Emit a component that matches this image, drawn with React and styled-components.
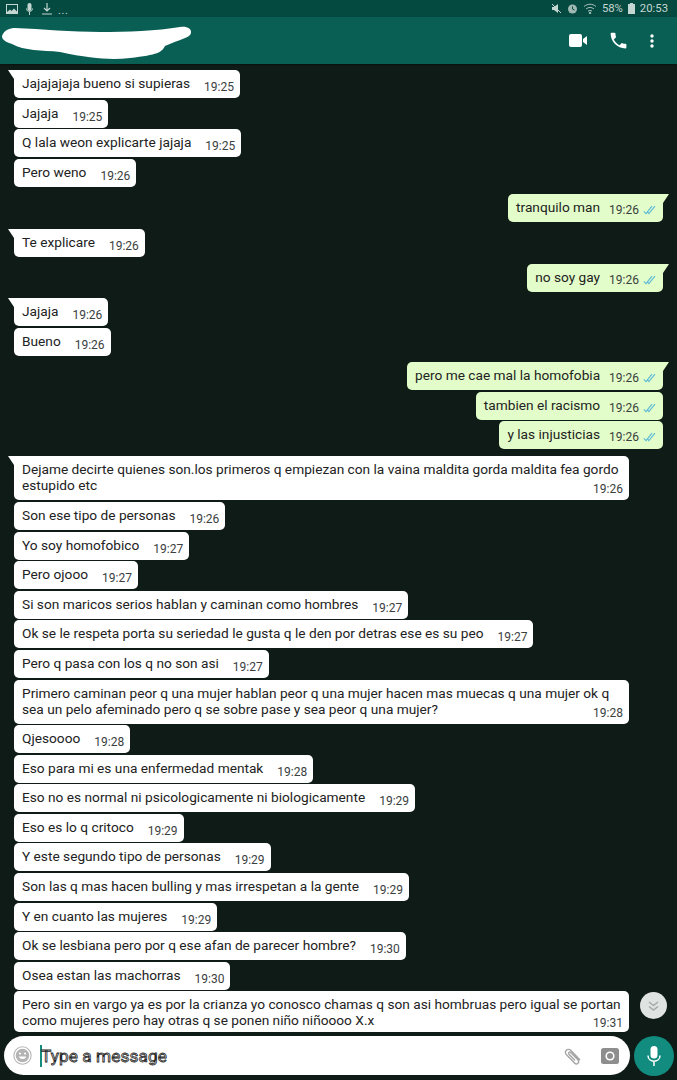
import React from "react";
import styled, { createGlobalStyle } from "styled-components";

const Global = createGlobalStyle`
  html, body { margin: 0; padding: 0; background: #0f1b16; }
  body { font-family: Roboto, "Liberation Sans", sans-serif; }
`;

const Screen = styled.div`
  width: 677px; height: 1080px; display: flex; flex-direction: column;
  background: #0f1b16; overflow: hidden; position: relative;
`;
const StatusBar = styled.div`
  height: 17px; flex: none; background: #054a40; display: flex; align-items: center;
  padding: 0 9px 0 6px; color: #c4d6d2; font-size: 11.3px;
`;
const StatusLeft = styled.div`display: flex; align-items: center; gap: 8px; flex: 1;`;
const StatusRight = styled.div`display: flex; align-items: center; gap: 5px;`;
const Dots = styled.span`font-size: 11px; letter-spacing: .6px; line-height: 1; margin-top: 3px; margin-left: -3px;`;
const Header = styled.header`
  height: 47px; flex: none; background: #0a5f54; display: flex; align-items: center;
  padding: 0 23px 0 2px; box-shadow: 0 1px 2px rgba(0,0,0,.4);
`;
const Blot = styled.svg`display: block; margin-top: 7px;`;
const HeaderIcons = styled.div`margin-left: auto; display: flex; align-items: center; gap: 21px;`;
const Chat = styled.main`
  flex: 1; min-height: 0; display: flex; flex-direction: column; padding: 6px 14px 0;
`;
const Bubble = styled.div`
  position: relative; box-sizing: border-box; flex: none;
  display: ${p => (p.$wide ? "flow-root" : "flex")};
  justify-content: flex-end;
  align-self: ${p => (p.$out ? "flex-end" : "flex-start")};
  max-width: 615px; min-height: 28px;
  margin-top: ${p => p.$gap}px;
  padding: 5px ${p => (p.$out ? 7 : 6)}px 2px 8px;
  background: ${p => (p.$out ? "#e2fdc9" : "#ffffff")};
  border-radius: ${p => (p.$tail ? (p.$out ? "5px 0 5px 5px" : "0 5px 5px 5px") : "5px")};
  color: #222;
  font-size: 13.7px; line-height: 16px;
  ${p => p.$tail ? `&::before {
    content: ""; position: absolute; top: 0; ${p.$out ? "right: -6px" : "left: -6px"};
    width: 0; height: 0; border-top: 9px solid ${p.$out ? "#e2fdc9" : "#fff"};
    ${p.$out ? "border-right: 6px solid transparent" : "border-left: 6px solid transparent"};
  }` : ""}
`;
const Body = styled.span``;
const Meta = styled.span`
  display: inline-flex; align-items: center; gap: 4px; align-self: flex-end;
  font-size: 12px; line-height: 14px; color: #3a403e;
  ${p => p.$wide
    ? `float: right; margin-top: ${p.$short ? 4 : 5}px; padding-bottom: ${p.$short ? 0 : 2}px;`
    : `margin-left: ${p.$out ? 9 : 14}px; padding-bottom: ${p.$out ? 3 : 2}px;`}
`;
const InputRow = styled.div`
  flex: none; height: 46px; display: flex; padding: 2px 3px 0 4px; box-sizing: border-box; gap: 4px;
`;
const Input = styled.div`
  flex: 1; height: 39px; background: #fff; border-radius: 20px; display: flex; align-items: center;
  padding: 0 11px 0 9px;
`;
const Caret = styled.span`width: 2px; height: 22px; background: #128c7e; margin-left: 8px; margin-right: -1px;`;
const Placeholder = styled.span`
  font-size: 17.2px; letter-spacing: .1px; color: #e2e2e2; -webkit-text-stroke: .8px #262626; flex: 1;
`;
const InputIcons = styled.div`display: flex; align-items: center; gap: 18px;`;
const Mic = styled.div`
  width: 40px; height: 40px; border-radius: 50%; background: #128c7e; display: flex; align-items: center; justify-content: center;
`;
const ScrollDown = styled.div`
  position: absolute; left: 640px; top: 992px; width: 27px; height: 27px; border-radius: 50%;
  background: #dfe3e1; display: flex; align-items: center; justify-content: center;
`;

const Checks = () => (
  <svg width="13" height="10" viewBox="0 0 13 10" fill="none" stroke="#5fbcd8" strokeWidth="1.2">
    <path d="M.8 6.400 3 8.600 9 1.200M4.600 7.200 5.800 8.600 12 1.200" />
  </svg>
);

const msgs = [
  ["Jajajajaja bueno si supieras", "19:25", 0, 1, 0],
  ["Jajaja", "19:25", 0, 0, 1.6],
  ["Q lala weon explicarte jajaja", "19:25", 0, 0, 1.6],
  ["Pero weno", "19:26", 0, 0, 1.6],
  ["tranquilo man", "19:26", 1, 1, 7.2],
  ["Te explicare", "19:26", 0, 1, 7],
  ["no soy gay", "19:26", 1, 1, 7],
  ["Jajaja", "19:26", 0, 1, 6],
  ["Bueno", "19:26", 0, 0, 2],
  ["pero me cae mal la homofobia", "19:26", 1, 1, 6],
  ["tambien el racismo", "19:26", 1, 0, 1.6],
  ["y las injusticias", "19:26", 1, 0, 1.6],
  ["Dejame decirte quienes son.los primeros q empiezan con la vaina maldita gorda maldita fea gordo estupido etc", "19:26", 0, 1, 6.8, 1],
  ["Son ese tipo de personas", "19:26", 0, 0, 2],
  ["Yo soy homofobico", "19:27", 0, 0, 1.6],
  ["Pero ojooo", "19:27", 0, 0, 1.6],
  ["Si son maricos serios hablan y caminan como hombres", "19:27", 0, 0, 1.6],
  ["Ok se le respeta porta su seriedad le gusta q le den por detras ese es su peo", "19:27", 0, 0, 1.6],
  ["Pero q pasa con los q no son asi", "19:27", 0, 0, 1.6],
  ["Primero caminan peor q una mujer hablan peor q una mujer hacen mas muecas q una mujer ok q sea un pelo afeminado pero q se sobre pase y sea peor q una mujer?", "19:28", 0, 0, 1.6, 1],
  ["Qjesoooo", "19:28", 0, 0, 1.6],
  ["Eso para mi es una enfermedad mentak", "19:28", 0, 0, 1.6],
  ["Eso no es normal ni psicologicamente ni biologicamente", "19:29", 0, 0, 1.6],
  ["Eso es lo q critoco", "19:29", 0, 0, 1.6],
  ["Y este segundo tipo de personas", "19:29", 0, 0, 1.6],
  ["Son las q mas hacen bulling y mas irrespetan a la gente", "19:29", 0, 0, 1.6],
  ["Y en cuanto las mujeres", "19:29", 0, 0, 1.6],
  ["Ok se lesbiana pero por q ese afan de parecer hombre?", "19:30", 0, 0, 1.6],
  ["Osea estan las machorras", "19:30", 0, 0, 1.6],
  ["Pero sin en vargo ya es por la crianza yo conosco chamas q son asi hombruas pero igual se portan como mujeres pero hay otras q se ponen niño niñoooo X.x", "19:31", 0, 0, 1.6, 1, 1],
];

export default function App() {
  return (
    <Screen>
      <Global />
      <StatusBar>
        <StatusLeft>
          <svg width="12" height="10" viewBox="0 0 12 10"><path fill="#c4d6d2" d="M0 0h12v10H0z" /><path fill="#054a40" d="M1 1h10v6.500L8 4.500 5.500 7 4 5.500 1 8zM2.500 2h2v2h-2z" /></svg>
          <svg width="7" height="12" viewBox="0 0 7 12"><rect x="1.500" width="4" height="8" rx="2" fill="#c4d6d2" /><path d="M.5 5.500c0 4 6 4 6 0M3.500 9v3" stroke="#c4d6d2" fill="none" /></svg>
          <svg width="12" height="12" viewBox="0 0 12 12" fill="none" stroke="#c4d6d2" strokeWidth="1.200"><path d="M6 0v8M3 5l3 3 3-3M1 11h10" /></svg>
          <Dots>...</Dots>
        </StatusLeft>
        <StatusRight>
          <svg width="11" height="11" viewBox="0 0 11 11"><path fill="#c4d6d2" d="M1 4h2l4-3v9L3 7H1z" /><path d="M1 1l9 9" stroke="#c4d6d2" /></svg>
          <svg width="11" height="11" viewBox="0 0 11 11"><circle cx="5.500" cy="6" r="4.500" fill="#9fb8b2" /><path d="M5.500 3.500V6l2 1" stroke="#054a40" fill="none" /></svg>
          <svg width="14" height="11" viewBox="0 0 14 11" fill="none" stroke="#a9c3bd"><path d="M1 3.500c3.500-3 8.500-3 12 0M3 6c2.500-2 5.500-2 8 0M5 8.200c1.200-.9 2.800-.9 4 0" /><circle cx="7" cy="10" r=".8" fill="#a9c3bd" /></svg>
          <span>58%</span>
          <svg width="7" height="11" viewBox="0 0 7 11"><path fill="#c4d6d2" d="M2 0h3v1h2v10H0V1h2z" /></svg>
          <span>20:53</span>
        </StatusRight>
      </StatusBar>
      <Header>
        <Blot width="190" height="36" viewBox="0 0 190 36">
          <path fill="#fff" d="M0 10C2 4 8 2 13 2 40 3 70 6 98 6c27 0 57-1 80-5 7-1 12 2 11 6-1 5-11 6-26 13-3 6-7 9-35 12-18 2-38 1-70-6-18-2-36-1-48-8C4 16 0 14 0 10z" />
        </Blot>
        <HeaderIcons>
          <svg width="18" height="13" viewBox="0 0 18 13"><rect width="13" height="13" rx="2" fill="#fff" /><path fill="#fff" d="M14 5l4-3v9l-4-3z" /></svg>
          <svg width="21" height="21" viewBox="0 0 24 24"><path fill="#fff" d="M6.600 10.800c1.400 2.800 3.800 5.100 6.600 6.600l2.200-2.200c.3-.3.700-.4 1-.2 1.100.4 2.300.6 3.600.6.600 0 1 .4 1 1V20c0 .6-.4 1-1 1C10.600 21 3 13.400 3 4c0-.6.400-1 1-1h3.500c.6 0 1 .4 1 1 0 1.300.2 2.500.6 3.600.1.300 0 .7-.2 1z" /></svg>
          <svg width="4" height="14" viewBox="0 0 4 14"><circle cx="2" cy="2" r="1.700" fill="#fff" /><circle cx="2" cy="7" r="1.700" fill="#fff" /><circle cx="2" cy="12" r="1.700" fill="#fff" /></svg>
        </HeaderIcons>
      </Header>
      <Chat>
        {msgs.map(([text, time, out, tail, gap, wide, short], i) => (
          <Bubble key={i} $out={!!out} $tail={!!tail} $gap={gap} $wide={!!wide}>
            <Body>{text}</Body>
            <Meta $wide={!!wide} $short={!!short} $out={!!out}>{time}{out ? <Checks /> : null}</Meta>
          </Bubble>
        ))}
      </Chat>
      <ScrollDown>
        <svg width="13" height="13" viewBox="0 0 13 13" fill="none" stroke="#a5aaa8" strokeWidth="1.500"><path d="M2 3l4.500 3.500L11 3M2 7.500l4.500 3.500L11 7.500" /></svg>
      </ScrollDown>
      <InputRow>
        <Input>
          <svg width="19" height="19" viewBox="0 0 18 18"><circle cx="9" cy="9" r="8.200" fill="#fff" stroke="#b4b4b4" /><circle cx="9" cy="9" r="6.400" fill="#b4b4b4" /><circle cx="6.600" cy="7.200" r="1" fill="#fff" /><circle cx="11.400" cy="7.200" r="1" fill="#fff" /><path d="M5.500 10h7c-.6 3.200-6.400 3.200-7 0z" fill="#fff" /></svg>
          <Caret />
          <Placeholder>Type a message</Placeholder>
          <InputIcons>
            <svg width="20" height="20" viewBox="0 0 20 20" fill="none" stroke="#a5a5a5" strokeWidth="1.400"><path d="M17 14 8 4.500C6.500 3 4.500 3 3.300 4.300 2 5.600 2.200 7.400 3.500 8.700l8 8.300c1.100 1.100 2.500 1.100 3.500.2 1-1 .9-2.300-.1-3.400L7.700 6.500c-.6-.6-1.300-.6-1.800-.1-.5.5-.4 1.200.1 1.800l6 6.200" /></svg>
            <svg width="18" height="16" viewBox="0 0 18 16"><rect width="18" height="16" rx="2.500" fill="#8e8e8e" /><circle cx="9" cy="8" r="4.600" fill="#fff" /><circle cx="9" cy="8" r="3" fill="#8e8e8e" /></svg>
          </InputIcons>
        </Input>
        <Mic>
          <svg width="14" height="20" viewBox="0 0 14 20"><rect x="3.500" y="0" width="7" height="12.500" rx="3.500" fill="#fff" /><path d="M1 9.500c0 7.500 12 7.500 12 0M7 15v5" stroke="#fff" strokeWidth="1.500" fill="none" /></svg>
        </Mic>
      </InputRow>
    </Screen>
  );
}
